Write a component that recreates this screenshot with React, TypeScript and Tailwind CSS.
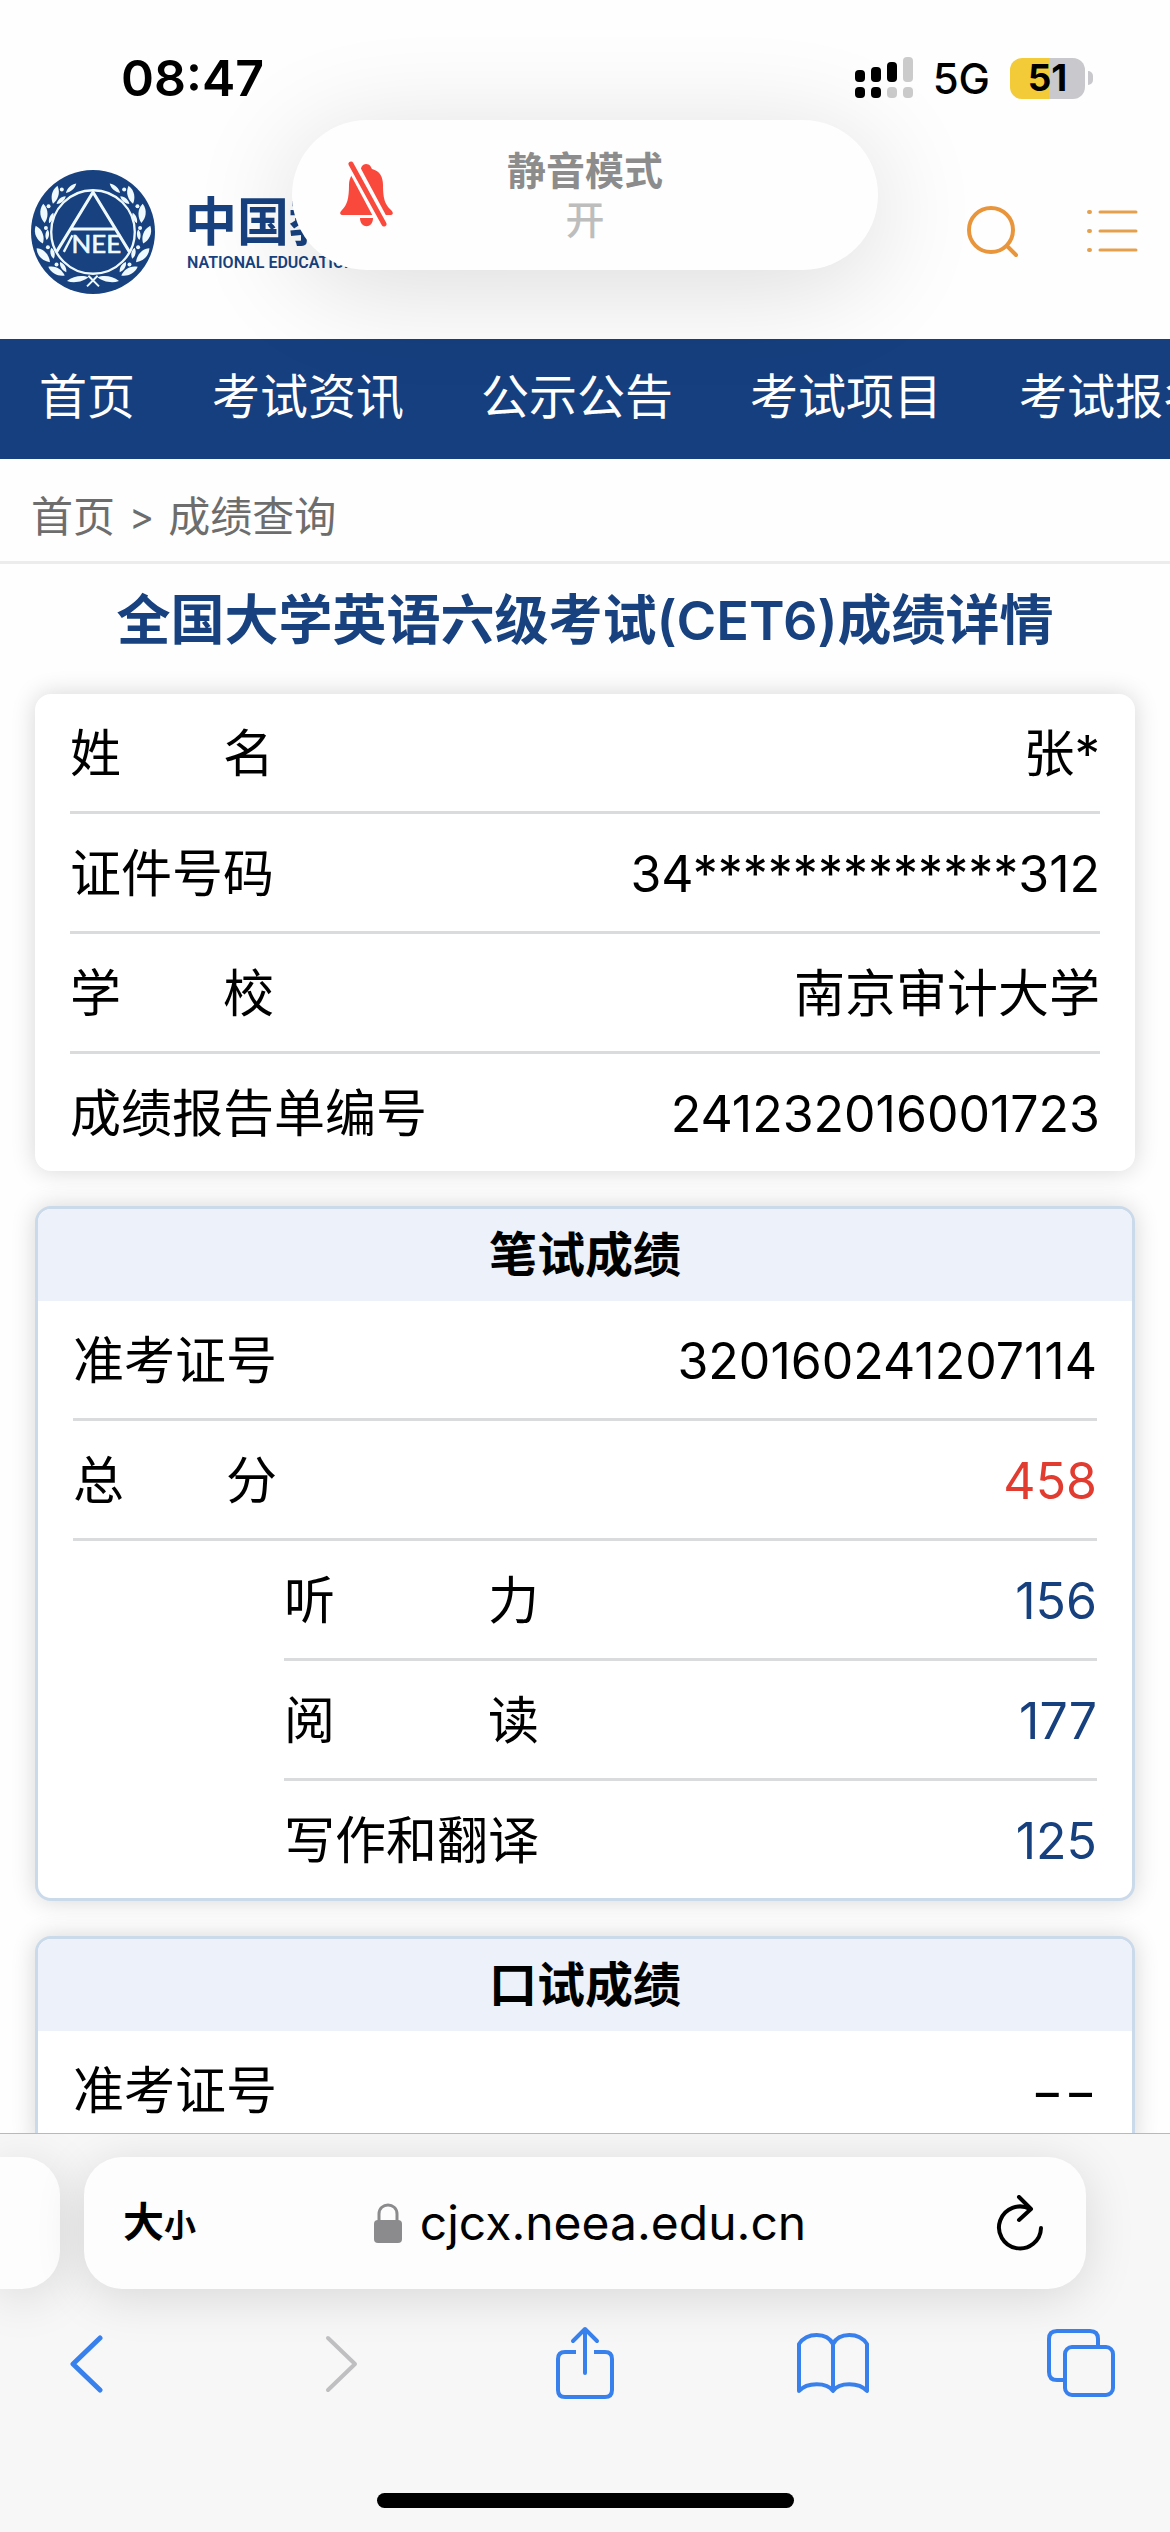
import React from "react";

const CJK = "font-[Inter,'Noto_Sans_CJK_SC',sans-serif]";

type Row = { label: string; value: string; tone?: "red" | "blue"; sub?: boolean };

const profile: Row[] = [
  { label: "姓\u3000\u3000名", value: "张*" },
  { label: "证件号码", value: "34*************312" },
  { label: "学\u3000\u3000校", value: "南京审计大学" },
  { label: "成绩报告单编号", value: "241232016001723" },
];

const written: Row[] = [
  { label: "准考证号", value: "320160241207114" },
  { label: "总\u3000\u3000分", value: "458", tone: "red" },
  { label: "听\u3000\u3000\u3000力", value: "156", tone: "blue", sub: true },
  { label: "阅\u3000\u3000\u3000读", value: "177", tone: "blue", sub: true },
  { label: "写作和翻译", value: "125", tone: "blue", sub: true },
];

const oral: Row[] = [{ label: "准考证号", value: "−−" }];

const tones = { red: "text-[#e23b30]", blue: "text-[#17407e]" };

function Rows({ rows }: { rows: Row[] }) {
  return (
    <dl className="px-[35px]">
      {rows.map((r, i) => (
        <div
          key={r.label}
          className={`flex items-center justify-between border-[#d9dbdc] pt-[4px] text-[51px] ${
            r.sub ? "ml-[211px]" : ""
          } ${i < rows.length - 1 ? "h-[120px] border-b-3" : "h-[117px]"}`}
        >
          <dt className="whitespace-pre">{r.label}</dt>
          <dd className={r.tone ? tones[r.tone] : ""}>
            <span className={/[\u4e00-\u9fff]/.test(r.value) ? "" : "text-[50px]"}>{r.value}</span>
          </dd>
        </div>
      ))}
    </dl>
  );
}

function ScoreCard({ title, rows }: { title: string; rows: Row[] }) {
  return (
    <section className="overflow-hidden rounded-[16px] border-3 border-[#cbdaea] bg-white shadow-[0_0_24px_rgba(0,0,0,0.16)]">
      <h2 className="flex h-[92px] items-center justify-center bg-[#edf1f9] text-[48px] font-bold">{title}</h2>
      <Rows rows={rows} />
    </section>
  );
}

const leaves = [
  [152, 86, 48, 42, 7],
  [104, 106, 14, 56, 11],
  [70, 162, -4, 58, 12],
  [56, 226, -22, 58, 12],
  [68, 288, -44, 58, 12],
  [108, 336, -62, 56, 11],
  [172, 360, -100, 66, 9],
  [122, 122, 50, 36, 7],
  [92, 176, 22, 34, 6],
  [80, 226, 6, 32, 6],
  [96, 282, -12, 34, 7],
  [128, 324, -32, 36, 7],
];
const buds = [
  [124, 90],
  [84, 140],
  [76, 206],
  [82, 264],
  [108, 316],
];

function Wreath() {
  return (
    <g fill="#eefaff">
      {leaves.map(([x, y, a, l, w]) => (
        <path
          key={`${x}-${y}`}
          transform={`translate(${x} ${y}) rotate(${a})`}
          d={`M0 ${-l / 2}C${w * 1.4} ${-l / 6} ${w} ${l / 4} 0 ${l / 2}C${-w} ${l / 4} ${-w * 1.4} ${-l / 6} 0 ${-l / 2}Z`}
        />
      ))}
      {buds.map(([x, y]) => (
        <circle key={`${x}-${y}`} cx={x} cy={y} r="6" />
      ))}
    </g>
  );
}

function Emblem() {
  return (
    <svg viewBox="28 28 380 380" className="size-[126px] shrink-0" aria-label="NEEA" role="img">
      <circle cx="218" cy="218" r="187" fill="#17417f" />
      <Wreath />
      <g transform="translate(436 0) scale(-1 1)">
        <Wreath />
      </g>
      <circle cx="218" cy="218" r="126" fill="#17417f" stroke="#eefaff" strokeWidth="7" />
      <g fill="none" stroke="#eefaff" strokeWidth="9">
        <path d="M108 278L218 98L328 278M150 209H286" />
        <path d="M130 278L156 228" strokeWidth="7" />
        <path d="M200 382L232 350M236 382L204 350" strokeWidth="6" />
      </g>
      <text x="228" y="281" textAnchor="middle" fill="#eefaff" stroke="#eefaff" strokeWidth="2" fontSize="78" fontFamily="Lato, sans-serif">
        NEE
      </text>
    </svg>
  );
}

function StatusBar() {
  return (
    <div className="flex h-[156px] shrink-0 items-center justify-between pr-[77px] pl-[121px]">
      <time className="text-[50px] font-semibold">08:47</time>
      <div className="flex items-center gap-[20px]">
        <svg viewBox="0 0 58 42" className="h-[42px] w-[58px]" role="img" aria-label="信号">
          <g fill="#000">
            <rect x="0" y="13" width="10" height="12" rx="4" />
            <rect x="16" y="10" width="10" height="15" rx="4" />
            <rect x="32" y="5" width="10" height="20" rx="4" />
            <rect x="0" y="30" width="10" height="11" rx="4" />
            <rect x="16" y="30" width="10" height="11" rx="4" />
          </g>
          <g fill="#cbcbcc">
            <rect x="48" y="0" width="10" height="25" rx="4" />
            <rect x="32" y="30" width="10" height="11" rx="4" />
            <rect x="48" y="30" width="10" height="11" rx="4" />
          </g>
        </svg>
        <span className="text-[42px] font-medium">5G</span>
        <div className="flex items-center gap-[3px]">
          <div className="flex h-[41px] w-[75px] items-center justify-center rounded-[12px] bg-linear-to-r from-[#f3cb38] from-52% to-[#c9c9cd] to-52% text-[37px] font-bold">
            51
          </div>
          <div className="h-[14px] w-[5px] rounded-r-full bg-[#c9c9cd]" />
        </div>
      </div>
    </div>
  );
}

function SilentBanner() {
  return (
    <div
      role="status"
      className="absolute top-[120px] left-1/2 z-10 flex h-[150px] w-[586px] -translate-x-1/2 items-center justify-center rounded-full bg-[#fefefe] shadow-[0_16px_110px_rgba(0,0,0,0.14)]"
    >
      <svg viewBox="0 0 54 70" className="absolute left-[48px] h-[70px] w-[54px]" aria-hidden="true">
        <path
          fill="#f9483c"
          d="M26 4C30 4 31 7 32 9C40 11 43 17 43 25C43 41 46 45 51 50C54 53 53 55 50 55H3C0 55 -1 53 2 50C7 45 9 39 9 25C9 17 13 11 21 9C21 7 23 4 26 4Z"
        />
        <path fill="#f9483c" d="M20 58H33C33 69 20 69 20 58Z" />
        <path d="M9 -1L46 68" stroke="#fefefe" strokeWidth="12" />
        <path d="M11 4L44 64" stroke="#f9483c" strokeWidth="5" strokeLinecap="round" />
      </svg>
      <div className="flex flex-col items-center text-[39px] leading-[49px]">
        <span className="font-semibold text-[#8c8c8c]">静音模式</span>
        <span className="font-medium text-[#bdbdbd]">开</span>
      </div>
    </div>
  );
}

function SiteHeader() {
  return (
    <header className="flex h-[183px] shrink-0 items-center justify-between pr-[32px] pb-[31px] pl-[30px]">
      <a href="#home" className="flex items-center gap-[29px]">
        <Emblem />
        <span className="flex flex-col pt-[4px] text-[#17417f]">
          <span className="text-[52px] leading-[58px] font-bold">中国教育考试网</span>
          <span className="pl-[2px] font-[Roboto,sans-serif] text-[16px] leading-[22px] font-semibold">
            NATIONAL EDUCATION EXAMINATIONS AUTHORITY
          </span>
        </span>
      </a>
      <div className="flex items-center gap-[68px]">
        <button type="button" aria-label="搜索">
          <svg viewBox="0 0 52 52" className="size-[52px]" fill="none" stroke="#e8953c" strokeWidth="4" strokeLinecap="round">
            <circle cx="25" cy="24" r="22" />
            <path d="M41 40L50 49" />
          </svg>
        </button>
        <button type="button" aria-label="菜单">
          <svg viewBox="0 0 52 52" className="size-[52px]" fill="none" stroke="#e5a04e" strokeWidth="3" strokeLinecap="round">
            <path d="M14 6H50M14 25H50M14 44H50" />
            <path d="M3 6H4M3 25H4M3 44H4" strokeWidth="4" />
          </svg>
        </button>
      </div>
    </header>
  );
}

function BrowserBar() {
  return (
    <footer className="shrink-0 overflow-hidden border-t border-[#b9b9bb] bg-[#f7f7f8]">
      <div className="flex gap-[24px] pt-[23px] pb-[30px]">
        <div className="h-[132px] w-[60px] rounded-r-[38px] bg-[#fdfdfd] shadow-[0_8px_50px_rgba(0,0,0,0.13)]" />
        <div className="mr-[84px] flex h-[132px] flex-1 items-center justify-between rounded-[38px] bg-[#fdfdfd] pr-[42px] pl-[39px] shadow-[0_8px_50px_rgba(0,0,0,0.13)]">
          <button type="button" className="flex items-baseline font-semibold" aria-label="文字大小">
            <span className="text-[41px]">大</span>
            <span className="text-[32px]">小</span>
          </button>
          <div className="flex items-center gap-[18px]">
            <svg viewBox="0 0 28 40" className="h-[40px] w-[28px]" aria-hidden="true">
              <rect x="0" y="17" width="28" height="23" rx="4" fill="#8b8b8d" />
              <path d="M5 18V11C5 -1 23 -1 23 11V18" fill="none" stroke="#8b8b8d" strokeWidth="3" />
            </svg>
            <span className="text-[48px]">cjcx.neea.edu.cn</span>
          </div>
          <button type="button" aria-label="重新载入" className="pl-[12px]">
            <svg viewBox="0 0 48 56" className="h-[56px] w-[48px]" fill="none" stroke="#000" strokeWidth="4" strokeLinecap="round" strokeLinejoin="round">
              <path d="M45 33A21 21 0 1 1 34 14" />
              <path d="M23 2L35 14L23 25" />
            </svg>
          </button>
        </div>
      </div>
      <nav aria-label="浏览器工具栏" className="flex h-[88px] items-center justify-between px-[51px]">
        <button type="button" aria-label="后退" className="flex w-[76px] justify-center">
          <svg viewBox="0 0 60 60" className="size-[60px]" fill="none" stroke="#3880ec" strokeWidth="5" strokeLinecap="round" strokeLinejoin="round">
            <path d="M41 5L14 31L41 57" />
          </svg>
        </button>
        <button type="button" aria-label="前进" disabled className="flex w-[76px] justify-center">
          <svg viewBox="0 0 60 60" className="size-[60px]" fill="none" stroke="#bfbfc1" strokeWidth="4" strokeLinecap="round" strokeLinejoin="round">
            <path d="M21 5L48 31L21 57" />
          </svg>
        </button>
        <button type="button" aria-label="共享" className="flex w-[76px] justify-center">
          <svg viewBox="0 0 60 76" className="h-[76px] w-[60px]" fill="none" stroke="#3880ec" strokeWidth="4" strokeLinecap="round" strokeLinejoin="round">
            <path d="M21 27H10Q3 27 3 34V65Q3 72 10 72H50Q57 72 57 65V34Q57 27 50 27H39" strokeLinecap="butt" />
            <path d="M30 48V4M18 16L30 4L42 16" />
          </svg>
        </button>
        <button type="button" aria-label="书签" className="flex w-[76px] justify-center">
          <svg viewBox="0 0 76 64" className="h-[64px] w-[76px]" fill="none" stroke="#3880ec" strokeWidth="4" strokeLinejoin="round">
            <path d="M38 13C32 1 12 1 4 13V60C12 51 32 51 38 60C44 51 64 51 72 60V13C64 1 44 1 38 13ZM38 13V60" />
          </svg>
        </button>
        <button type="button" aria-label="标签页" className="flex w-[76px] justify-center">
          <svg viewBox="0 0 68 68" className="size-[68px]" fill="none" stroke="#3880ec" strokeWidth="4">
            <rect x="18" y="18" width="48" height="48" rx="7" />
            <path d="M18 51H10Q2 51 2 43V10Q2 2 10 2H43Q51 2 51 10V18" />
          </svg>
        </button>
      </nav>
      <div className="flex h-[125px] items-end justify-center pb-[24px]">
        <div className="h-[15px] w-[417px] rounded-full bg-black" />
      </div>
    </footer>
  );
}

const links = ["首页", "考试资讯", "公示公告", "考试项目", "考试报名"];

export default function App() {
  return (
    <div className={`relative flex h-screen flex-col overflow-hidden bg-[#fefefe] text-black ${CJK}`}>
      <SilentBanner />
      <StatusBar />
      <SiteHeader />
      <nav className="flex h-[120px] shrink-0 items-center gap-[77px] overflow-hidden bg-[#163f7f] pl-[39px] text-[48px] text-white">
        {links.map((t) => (
          <a key={t} href="#nav" className="shrink-0 pb-1">
            {t}
          </a>
        ))}
      </nav>
      <main className="min-h-0 flex-1 overflow-y-auto [scrollbar-width:none]">
        <nav aria-label="面包屑" className="flex h-[105px] items-center gap-[14px] border-b-3 border-[#ececec] pt-[12px] pl-[31px] text-[42px] text-[#6d6d6d]">
          <a href="#home">首页</a>
          <span className="text-[38px]">&gt;</span>
          <a href="#score">成绩查询</a>
        </nav>
        <h1 className="flex h-[130px] items-center justify-center pb-[18px] text-[54px] font-semibold text-[#17417f]">
          全国大学英语六级考试(CET6)成绩详情
        </h1>
        <div className="flex flex-col gap-[35px] px-[35px]">
          <section className="rounded-[16px] bg-white shadow-[0_0_24px_rgba(0,0,0,0.16)]">
            <Rows rows={profile} />
          </section>
          <ScoreCard title="笔试成绩" rows={written} />
          <ScoreCard title="口试成绩" rows={oral} />
        </div>
      </main>
      <BrowserBar />
    </div>
  );
}
